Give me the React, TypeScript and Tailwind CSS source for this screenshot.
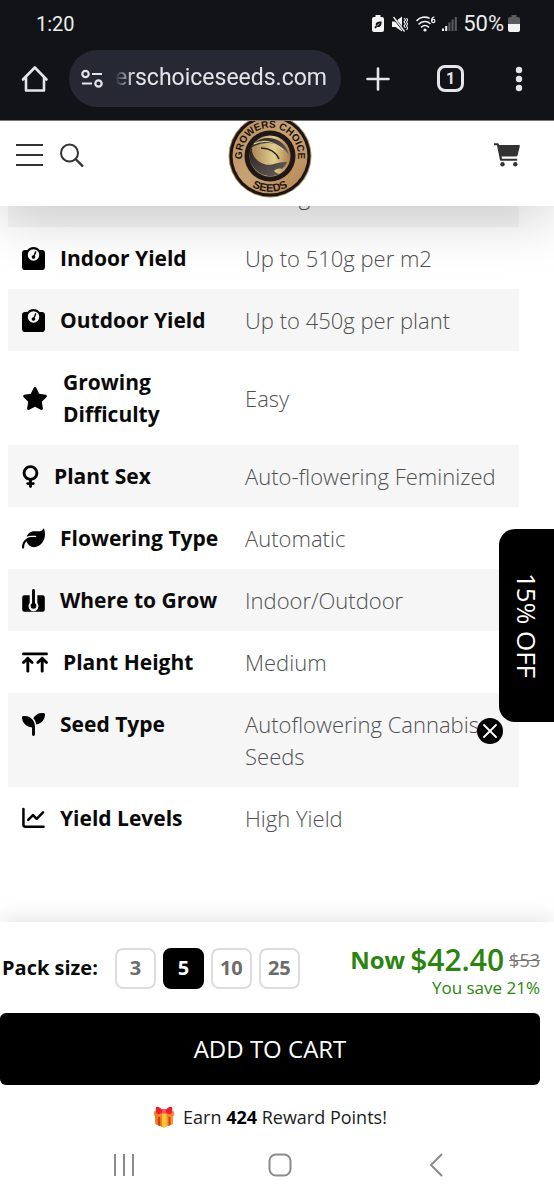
import { useState } from "react";
import type { ReactNode } from "react";
import { FaArrowsUpToLine, FaLeaf, FaSeedling, FaStar, FaVenus, FaWeightScale } from "react-icons/fa6";
import clsx from "clsx";

function GrowIcon() {
  return (
    <svg viewBox="0 0 24 24" className="h-[23px] w-[23px]" aria-hidden="true">
      <path
        d="M2.500 6.500H8v8.200a5.200 5.200 0 1 0 8 0V6.500h5.500a2.300 2.300 0 0 1 2.300 2.300V21.500a2.300 2.300 0 0 1-2.300 2.300h-19A2.300 2.300 0 0 1 .2 21.500V8.800a2.300 2.300 0 0 1 2.300-2.300Z"
        fill="currentColor"
      />
      <path d="M12 1.500v15" stroke="currentColor" strokeWidth="3" strokeLinecap="round" />
      <circle cx="12" cy="17.500" r="3" fill="currentColor" />
    </svg>
  );
}

function ChartIcon() {
  return (
    <svg viewBox="0 0 24 24" className="h-[23px] w-[23px]" fill="none" stroke="currentColor" strokeWidth="2.600" strokeLinecap="round" strokeLinejoin="round" aria-hidden="true">
      <path d="M1.500 2v16.500a2 2 0 0 0 2 2h19" />
      <path d="m6.500 13.500 5-5 3.800 3.800L22 5.500" />
    </svg>
  );
}

const specs: { label: string; value: string; icon: ReactNode }[] = [
  { label: "Effect", value: "Strong", icon: <FaLeaf className="h-4 w-[26px]" /> },
  { label: "Indoor Yield", value: "Up to 510g per m2", icon: <FaWeightScale className="h-[23px] w-[23px]" /> },
  { label: "Outdoor Yield", value: "Up to 450g per plant", icon: <FaWeightScale className="h-[23px] w-[23px]" /> },
  { label: "Growing Difficulty", value: "Easy", icon: <FaStar className="h-[23px] w-[26px]" /> },
  { label: "Plant Sex", value: "Auto-flowering Feminized", icon: <FaVenus className="h-[23px] w-[17px]" /> },
  { label: "Flowering Type", value: "Automatic", icon: <FaLeaf className="h-[23px] w-[23px]" /> },
  { label: "Where to Grow", value: "Indoor/Outdoor", icon: <GrowIcon /> },
  { label: "Plant Height", value: "Medium", icon: <FaArrowsUpToLine className="h-[23px] w-[26px]" /> },
  { label: "Seed Type", value: "Autoflowering Cannabis Seeds", icon: <FaSeedling className="h-[23px] w-[23px]" /> },
  { label: "Yield Levels", value: "High Yield", icon: <ChartIcon /> },
];

const packSizes = [3, 5, 10, 25];

function StatusBar() {
  return (
    <div className="flex h-12 items-center justify-between pr-[34px] pl-9 font-['Roboto',sans-serif] text-xl text-[#ececee]">
      <span>1:20</span>
      <div className="flex items-center gap-1.5">
        <svg viewBox="0 0 12 17" className="h-[17px] w-3" aria-hidden="true">
          <path d="M3.500 0h5v2H10a2 2 0 0 1 2 2v11a2 2 0 0 1-2 2H2a2 2 0 0 1-2-2V4a2 2 0 0 1 2-2h1.500Z" fill="#f4f4f5" />
          <path d="M2.500 13c.2-1.200.8-1.800 1.500-2.200C3 8 5 6.500 9.500 6.300c.3 4.200-1 6.200-4.500 5.700L3.500 13.500Z" fill="#121316" />
          <path d="m4.500 11 3-2.500" stroke="#f4f4f5" strokeWidth=".7" />
        </svg>
        <svg viewBox="0 0 16 16" className="ml-0.5 h-4 w-4" fill="none" aria-hidden="true">
          <path d="M0 5.500h3.500L10 .5v15L3.500 11H0Z" fill="#f4f4f5" />
          <path d="m.5 0 12 15.500" stroke="#121316" strokeWidth="2.500" />
          <path d="m1.500 1 11 14.500" stroke="#f4f4f5" strokeWidth="1.300" />
          <path d="m12 2 1.500 2L12 6l1.500 2L12 10l1.500 2M14.500 2l1.200 2-1.200 2 1.200 2-1.200 2 1.200 2-1.200 2" stroke="#f4f4f5" strokeWidth="1.100" />
        </svg>
        <svg viewBox="0 0 20 16" className="ml-0.5 h-4 w-5" fill="none" stroke="#f4f4f5" strokeWidth="1.600" strokeLinecap="round" aria-hidden="true">
          <path d="M1 4.500C4 1.200 9 .2 13 2M3 8c3-3 8-3.500 11-.5M5.500 11c2-1.800 5-1.800 7 0" />
          <circle cx="9" cy="14" r=".8" fill="#f4f4f5" />
          <path d="M18 1c-1.800.3-2.500 2-2.300 3.800" strokeWidth="1.200" />
          <circle cx="17.300" cy="5" r="1.600" strokeWidth="1.200" />
        </svg>
        <svg viewBox="0 0 15 16" className="h-4 w-[15px]" aria-hidden="true">
          <path d="M0 12.500h2V15H0ZM3.200 10h2v5h-2Z" fill="#f4f4f5" />
          <path d="M6.400 6.500h2V15h-2ZM9.600 3.500h2V15h-2ZM12.800 1h2v14h-2Z" fill="#5b5c5f" />
        </svg>
        <div className="flex items-center gap-1">
          <span className="text-[22px]">50%</span>
          <svg viewBox="0 0 12 17" className="h-[17px] w-3" aria-hidden="true">
            <path d="M3.500 0h5v2H10a2 2 0 0 1 2 2v5H0V4a2 2 0 0 1 2-2h1.500Z" fill="#5b5c5f" />
            <path d="M0 9h12v6a2 2 0 0 1-2 2H2a2 2 0 0 1-2-2Z" fill="#f4f4f5" />
          </svg>
        </div>
      </div>
    </div>
  );
}

function BrowserBar() {
  return (
    <div className="flex h-[72px] items-center px-5 pb-[11px] text-[#e4e4ea]">
      <button type="button" aria-label="Home">
        <svg viewBox="0 0 30 30" className="h-[30px] w-[30px]" fill="none" stroke="currentColor" strokeWidth="2.600" strokeLinejoin="round" strokeLinecap="round" aria-hidden="true">
          <path d="M3 15.500 14.800 3.500l11.700 12M6 13v13.500h18V13" />
        </svg>
      </button>
      <div className="ml-[19px] flex h-[57px] min-w-0 flex-1 items-center gap-3 rounded-full bg-[#262933] pr-2 pl-3">
        <svg viewBox="0 0 22 20" className="h-5 w-[22px] shrink-0" fill="none" stroke="currentColor" strokeWidth="2.200" aria-hidden="true">
          <circle cx="4.500" cy="5" r="3.200" />
          <path d="M11 5h10M1 14.500h10" />
          <circle cx="17.500" cy="14.500" r="3.200" />
        </svg>
        <input
          type="text"
          aria-label="Address"
          defaultValue="erschoiceseeds.com"
          className="min-w-0 flex-1 bg-transparent font-['Roboto',sans-serif] text-[23px] outline-none [mask-image:linear-gradient(to_right,transparent,black_18px)]"
        />
      </div>
      <button type="button" aria-label="New tab" className="ml-[25px]">
        <svg viewBox="0 0 24 24" className="h-6 w-6" stroke="currentColor" strokeWidth="2.600" strokeLinecap="round" aria-hidden="true">
          <path d="M12 1.500v21M1.500 12h21" />
        </svg>
      </button>
      <button
        type="button"
        aria-label="Open tabs"
        className="ml-[47px] flex h-[27px] w-[27px] items-center justify-center rounded-lg border-[3px] border-current font-['Roboto',sans-serif] text-base font-bold"
      >
        1
      </button>
      <button type="button" aria-label="More options" className="ml-10">
        <svg viewBox="0 0 30 26" className="h-[26px] w-[30px]" fill="currentColor" aria-hidden="true">
          <circle cx="15" cy="4" r="3.200" />
          <circle cx="15" cy="13" r="3.200" />
          <circle cx="15" cy="22" r="3.200" />
        </svg>
      </button>
    </div>
  );
}

function Logo() {
  return (
    <svg viewBox="0 0 84 84" className="h-[84px] w-[84px]" role="img" aria-label="Growers Choice Seeds">
      <defs>
        <linearGradient id="ring" x1="0" y1="0" x2="1" y2="1">
          <stop offset="0" stopColor="#b98f5f" />
          <stop offset=".5" stopColor="#c9a273" />
          <stop offset="1" stopColor="#b58552" />
        </linearGradient>
        <linearGradient id="gold" x1="0" y1="0" x2="1" y2="0">
          <stop offset="0" stopColor="#a58052" />
          <stop offset=".6" stopColor="#e2cf8e" />
          <stop offset="1" stopColor="#a87e4c" />
        </linearGradient>
        <linearGradient id="leaf" x1="0" y1="0" x2="1" y2="1">
          <stop offset="0" stopColor="#27211f" />
          <stop offset="1" stopColor="#6c6260" />
        </linearGradient>
        <path id="arcTop" d="M14.700 48A28 28 0 1 1 69.300 48" />
        <path id="arcBottom" d="M16 66.500A35.700 35.700 0 0 0 68 66.500" />
      </defs>
      <circle cx="42" cy="42" r="41.500" fill="#a98a63" />
      <circle cx="42" cy="42" r="40.500" fill="#1b1412" />
      <circle cx="42" cy="42" r="37.500" fill="url(#ring)" />
      <circle cx="42" cy="42" r="25.500" fill="#1f1816" />
      <circle cx="42" cy="42" r="20.500" fill="url(#gold)" />
      <path d="M22 35c4-7 10-11 18-11 11 0 19 7 21 17-5-7-12-12-21-12-7 0-13 2-18 6Z" fill="url(#leaf)" />
      <path d="M26 30c9-5 20-3 29 6" stroke="#e2cf8e" strokeWidth="1.200" fill="none" />
      <path d="M24 33c-1 8 4 14 12 17 5 2 9 0 14-1 3-1 6-1 9-1-1 3-3 5-5 7-3-1-6 0-8 2 2 2 4 3 6 3-9 4-19 2-25-5-6-6-7-15-3-22Z" fill="url(#leaf)" />
      <path d="M33 34c8 0 15 4 18 11" stroke="#27211f" strokeWidth="1.600" fill="none" />
      <g fill="#1b1412" fontFamily="Liberation Sans, sans-serif" fontWeight="700" fontSize="10" textAnchor="middle">
        <text>
          <textPath href="#arcTop" startOffset="50%">GROWERS CHOICE</textPath>
        </text>
        <text fontSize="11">
          <textPath href="#arcBottom" startOffset="50%">SEEDS</textPath>
        </text>
      </g>
    </svg>
  );
}

function SiteHeader() {
  return (
    <header className="relative z-10 grid h-[86px] grid-cols-3 items-start overflow-hidden border-t border-[#77777b] bg-white pr-[34px] pl-4 text-[#333] shadow-[0_10px_60px_rgba(0,0,0,0.2)]">
      <div className="flex h-[68px] items-center gap-4">
        <button type="button" aria-label="Menu">
          <svg viewBox="0 0 28 24" className="h-6 w-7" stroke="currentColor" strokeWidth="2" aria-hidden="true">
            <path d="M0 2h27M0 12h27M0 22h27" />
          </svg>
        </button>
        <button type="button" aria-label="Search">
          <svg viewBox="0 0 24 24" className="h-6 w-6" fill="none" stroke="currentColor" strokeWidth="2" aria-hidden="true">
            <circle cx="9.500" cy="10" r="8.500" />
            <path d="m15.500 16 7.500 7.500" strokeWidth="2.400" />
          </svg>
        </button>
      </div>
      <a href="#" className="-mt-[7px] justify-self-center pl-1">
        <Logo />
      </a>
      <div className="flex h-[68px] items-center justify-end">
        <a href="#" aria-label="Cart">
          <svg viewBox="0 0 26 24" className="h-6 w-[26px]" fill="currentColor" aria-hidden="true">
            <path d="M0 .3h3.800c.5 0 .9.300 1 .8L5.200 2H24.800c.7 0 1.200.6 1 1.300l-2.200 9c-.2.700-.8 1.200-1.500 1.200H7.600l.4 2.300h15.200V17.800H7.300c-.7 0-1.200-.5-1.400-1.100L3 2.300H0Z" />
            <circle cx="8.500" cy="21.300" r="2.200" />
            <circle cx="21.300" cy="21.300" r="2.200" />
          </svg>
        </a>
      </div>
    </header>
  );
}

function SpecTable() {
  return (
    <table className="-mt-[41px] w-full table-fixed border-collapse text-left leading-8">
      <tbody>
        {specs.map((spec) => (
          <tr key={spec.label} className="odd:bg-[#f6f6f6]">
            <th scope="row" className="w-[46%] py-[15px] pr-3 pl-3.5 align-top text-[21px] font-bold text-[#0a0a0a]">
              <div className="flex items-center gap-[15px]">
                <span className="shrink-0 text-black">{spec.icon}</span>
                <span>{spec.label}</span>
              </div>
            </th>
            <td className="py-[15px] pl-0.5 text-[22px] font-light text-[#505050]">{spec.value}</td>
          </tr>
        ))}
      </tbody>
    </table>
  );
}

function DiscountTab() {
  return (
    <aside className="absolute top-[529px] right-0 z-20">
      <button type="button" className="flex h-[193px] w-[55px] items-center justify-center rounded-l-2xl bg-black text-[26px] font-medium text-white [writing-mode:vertical-rl]">
        15% OFF
      </button>
      <button
        type="button"
        aria-label="Close offer"
        className="absolute -bottom-[22px] -left-[22px] flex h-[26px] w-[26px] items-center justify-center rounded-full bg-black text-white"
      >
        <svg viewBox="0 0 14 14" className="h-3.5 w-3.5" stroke="currentColor" strokeWidth="1.800" strokeLinecap="round" aria-hidden="true">
          <path d="m1 1 12 12M13 1 1 13" />
        </svg>
      </button>
    </aside>
  );
}

function GiftIcon() {
  return (
    <svg viewBox="0 0 22 22" className="h-[22px] w-[22px]" aria-hidden="true">
      <path d="m2 9 8.500 2.500L20 9v9l-9 3.500L2.500 18Z" fill="#f39a22" />
      <path d="m2 9 8.500 2.500v10L2.500 18Z" fill="#e57c16" />
      <path d="m1 5.500 10-2.500 10 2.500v4l-10 3-10-3Z" fill="#f7832b" />
      <path d="m9 7.500 4.500 0v13l-2.500 1-2-1Z" fill="#f8c63a" />
      <path d="M5 10.500 7 11v9l-2-.8ZM15.500 11l2-.6v8.700l-2 .8Z" fill="#d8341f" />
      <path d="M10.500 6C8 1 4 0 3 1.200 2.300 3 3 7 4 8c2 .5 5-.5 6.500-2ZM11.500 6C14 1 18 0 19 1.200c.7 1.800 0 5.800-1 6.800-2 .5-5-.5-6.500-2Z" fill="#e8222c" />
      <path d="M9 3h4v4.500H9Z" fill="#f7575a" />
    </svg>
  );
}

function CartBar() {
  const [packSize, setPackSize] = useState(5);

  return (
    <section className="relative z-10 bg-white pt-[22px] pr-3.5 shadow-[0_-4px_20px_rgba(0,0,0,0.1)]">
      <div className="mb-[13px] flex items-start justify-between">
        <div className="flex h-12 items-center pl-0.5">
          <span id="pack-size" className="mr-[17px] text-xl font-bold text-[#0a0a0a]">Pack size:</span>
          <div role="group" aria-labelledby="pack-size" className="flex gap-[7px]">
            {packSizes.map((size) => (
              <button
                key={size}
                type="button"
                aria-pressed={size === packSize}
                onClick={() => setPackSize(size)}
                className={clsx(
                  "h-[41px] w-[41px] rounded-lg border-2 text-xl font-bold",
                  size === packSize ? "border-black bg-black text-white" : "border-[#ddd] bg-white text-[#6b6b6b]"
                )}
              >
                {size}
              </button>
            ))}
          </div>
        </div>
        <div className="text-right text-[#2c8410]">
          <p className="flex h-8 items-center justify-end gap-[5px]">
            <span className="text-2xl font-bold">Now</span>
            <span className="text-[30px] leading-8 font-semibold">$42.40</span>
            <s className="text-lg text-[#777]">$53</s>
          </p>
          <p className="text-[17px] leading-6 font-medium">You save 21%</p>
        </div>
      </div>
      <button type="button" className="h-18 w-full rounded-md bg-black text-2xl font-medium text-white">
        ADD TO CART
      </button>
      <p className="flex h-16 items-center justify-center gap-2 text-lg text-[#1c1c1c]">
        <GiftIcon />
        <span>
          Earn <b className="text-black">424</b> Reward Points!
        </span>
      </p>
    </section>
  );
}

function SystemNav() {
  return (
    <nav className="relative z-10 flex items-center justify-around bg-white pr-[41px] pb-[19px] pl-[46px] text-[#8a8a8a]">
      <button type="button" aria-label="Recent apps" className="flex h-8 items-center">
        <svg viewBox="0 0 22 22" className="h-[22px] w-[22px]" stroke="currentColor" strokeWidth="2" aria-hidden="true">
          <path d="M2 0v22M11 0v22M20 0v22" />
        </svg>
      </button>
      <button type="button" aria-label="Home screen" className="flex h-8 items-center">
        <svg viewBox="0 0 24 24" className="h-6 w-6" fill="none" stroke="currentColor" strokeWidth="2" aria-hidden="true">
          <rect x="1.500" y="1.500" width="21" height="21" rx="6.500" />
        </svg>
      </button>
      <button type="button" aria-label="Back" className="flex h-8 items-center">
        <svg viewBox="0 0 22 24" className="h-6 w-[22px]" fill="none" stroke="currentColor" strokeWidth="2" aria-hidden="true">
          <path d="M17 1 6 12l11 11" />
        </svg>
      </button>
    </nav>
  );
}

export default function App() {
  return (
    <div className="relative flex min-h-screen flex-col bg-white font-['Open_Sans','Noto_Sans',sans-serif]">
      <div className="relative z-20 bg-[#121316]">
        <StatusBar />
        <BrowserBar />
      </div>
      <SiteHeader />
      <main className="flex-1 pr-[35px] pl-2">
        <SpecTable />
      </main>
      <CartBar />
      <SystemNav />
      <DiscountTab />
    </div>
  );
}
